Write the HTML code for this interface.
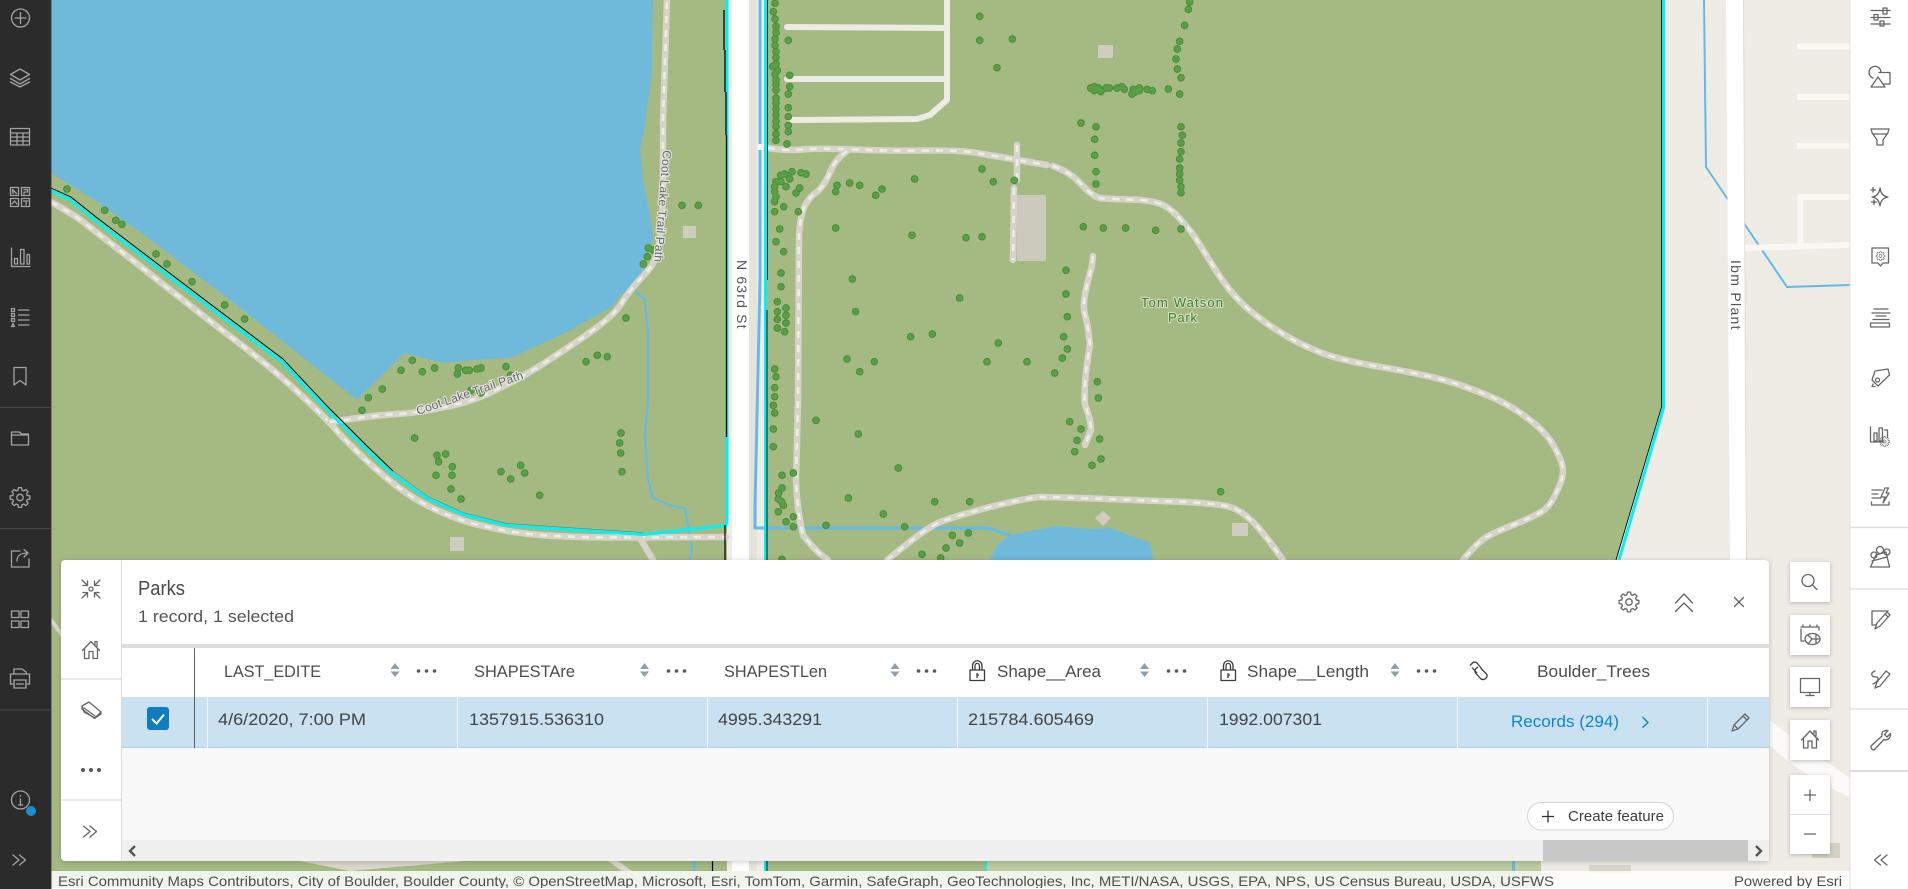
<!DOCTYPE html>
<html><head><meta charset="utf-8"><title>Parks</title>
<style>
html,body{margin:0;padding:0;width:1908px;height:889px;overflow:hidden;background:#fff}
svg{display:block}
text{font-family:"Liberation Sans",sans-serif}
.tr{fill:none;stroke:#d6d4c9;stroke-width:6.5;stroke-linejoin:round;stroke-linecap:round}
.td{fill:none;stroke:#eeece6;stroke-width:2.6;stroke-dasharray:7 7;stroke-linejoin:round}
.ln{fill:none;stroke:#ecebe4;stroke-width:6;stroke-linejoin:round;stroke-linecap:round}
.bl{fill:none;stroke:#62bbe6;stroke-width:2;stroke-linejoin:round}
.cy{fill:none;stroke:#00f2f7;stroke-width:3;stroke-linejoin:round}
.bk{fill:none;stroke:#000;stroke-width:.9;stroke-linejoin:round}
.hd{font-size:17px;fill:#4d4d4d}
.rw{font-size:17px;fill:#444}
.ic{fill:none;stroke:#a3a3a3;stroke-width:1.3;stroke-linejoin:round;stroke-linecap:round}
.ig{fill:none;stroke:#666;stroke-width:1.3;stroke-linejoin:round;stroke-linecap:round}
.div1{stroke:#484848;stroke-width:1}
.div2{stroke:#dcdcdc;stroke-width:1.2}
.s1{fill:none;stroke:#4b8c3a;stroke-width:23;stroke-linecap:round}
.s2{fill:none;stroke:#589f45;stroke-width:17;stroke-linecap:round}
.rl{font-size:14px;fill:#555;letter-spacing:.5px}
.tl{font-size:12px;fill:#666;stroke:#e6e6e0;stroke-width:2.2px;paint-order:stroke;stroke-linejoin:round}
.pk{font-size:13px;fill:#3f7c2f;stroke:#d4dfc2;stroke-width:2.2px;paint-order:stroke;stroke-linejoin:round}
</style></head><body>
<svg xmlns="http://www.w3.org/2000/svg" width="1908" height="889" viewBox="0 0 1908 889">
<defs>
<path id="gear" d="M9.88 -1.56L9.88 1.56L7.34 1.97L6.58 3.8L8.09 5.88L5.88 8.09L3.8 6.58L1.97 7.34L1.56 9.88L-1.56 9.88L-1.97 7.34L-3.8 6.58L-5.88 8.09L-8.09 5.88L-6.58 3.8L-7.34 1.97L-9.88 1.56L-9.88 -1.56L-7.34 -1.97L-6.58 -3.8L-8.09 -5.88L-5.88 -8.09L-3.8 -6.58L-1.97 -7.34L-1.56 -9.88L1.56 -9.88L1.97 -7.34L3.8 -6.58L5.88 -8.09L8.09 -5.88L6.58 -3.8L7.34 -1.97ZM3.2 0A3.2 3.2 0 1 1 -3.2 0A3.2 3.2 0 1 1 3.2 0Z"/>
<path id="home" d="M-8.5 1L0 -8L8.5 1M-6.5 -1V9H-2V2H2V9H6.5V-1M4 -5V-8H6V-3"/>
<path id="t9" d="M165 10h0M160 35h0M165 57h0M168 79h0M168 98h0M165 117h0M165 136h0M168 155h0M168 173h0M168 192h0M158 200h0M172 211h0M165 223h0M168 240h0M168 253h0M168 270h0M168 294h0M168 309h0M168 327h0M168 345h0M168 364h0M168 380h0M168 402h0M168 421h0M205 121h0M209 226h0M209 260h0M205 282h0M205 323h0M205 350h0M205 376h0M205 395h0M201 432h0M779 49h0M779 121h0M877 117h0M831 203h0M1409 6h0M1405 28h0M1394 76h0M1379 124h0M1372 147h0M1368 177h0M1372 207h0M1383 233h0M1379 282h0M1345 267h0M1112 264h0M1123 260h0M1127 268h0M1135 264h0M1123 272h0M1143 275h0M1158 264h0M1168 264h0M1191 264h0M1206 260h0M1213 268h0M1240 268h0M1258 264h0M1236 282h0M1247 275h0M1258 272h0M1281 268h0M1297 272h0M1083 369h0M1128 380h0M1124 418h0M1124 466h0M1128 515h0M1128 552h0M1383 380h0M1387 406h0M1383 429h0M1383 455h0M1379 477h0M1379 504h0M1379 522h0M1379 541h0M1383 560h0M1383 578h0M786 507h0M820 545h0M883 541h0M216 515h0M243 518h0M258 522h0M194 522h0M182 526h0M168 545h0M183 545h0M209 537h0M198 560h0M164 560h0M164 575h0M168 590h0M164 605h0M239 564h0M228 579h0M191 620h0M164 635h0M235 635h0M179 687h0M168 725h0M191 755h0M183 819h0M183 860h0M351 556h0M389 549h0M419 556h0M347 575h0M486 567h0M467 586h0M584 537h0M347 684h0M397 837h0M576 706h0M738 713h0M786 710h0M1090 680h0M1150 684h0M1217 684h0M1307 691h0M1383 687h0M1038 811h0"/>
<path id="t10" d="M172 65h0M198 84h0M172 95h0M198 106h0M172 118h0M198 129h0M172 144h0M194 155h0M407 95h0M719 54h0M1038 42h0M1042 110h0M572 170h0M637 162h0M835 189h0M1031 170h0M1042 207h0M1027 234h0M381 237h0M463 245h0M419 275h0M801 245h0M921 245h0M1004 279h0M164 267h0M168 290h0M164 323h0M164 350h0M160 376h0M164 399h0M1132 305h0M1135 354h0M288 421h0M415 462h0M160 447h0M160 500h0M1049 425h0M1083 447h0M1071 481h0M1139 477h0M1064 515h0M1143 537h0M1116 556h0M535 564h0M186 586h0M220 579h0M186 624h0M176 639h0M175 657h0M185 665h0M190 676h0M175 695h0M385 654h0M644 665h0M749 665h0M490 702h0M220 710h0M198 725h0M220 740h0M318 736h0M554 740h0M1502 635h0M697 766h0M745 759h0M719 789h0M678 804h0M606 823h0M662 834h0M186 838h0"/>
<path id="t12" d="M1146 16h0M1195 16h0M1045 144h0M1060 150h0M1042 170h0M1030 192h0M978 354h0M892 466h0M922 470h0M858 485h0M337 481h0M303 511h0M367 515h0M404 504h0M475 504h0M472 522h0M497 511h0M508 511h0M531 507h0M543 504h0M618 500h0M632 526h0M513 571h0M543 579h0M247 567h0M205 593h0M186 631h0M344 714h0M411 766h0M437 762h0M416 785h0M457 800h0M408 826h0M456 826h0M453 867h0M483 897h0M603 815h0M662 796h0M674 819h0M632 837h0M719 886h0M963 699h0M959 729h0M962 759h0M966 815h0"/>
<path id="t1" d="M201 567h0M314 631h0M347 661h0M366 673h0M468 762h0M501 792h0M576 845h0M674 915h0M734 957h0"/>
<path id="pA" d="M51 202Q75 215 87 225Q100 235 140 266Q180 298 227 334Q275 370 302 396Q330 422 337 431Q345 440 367 461Q390 482 405 492Q420 503 441 512Q463 522 488 527Q513 533 540 535Q567 537 603 537.500L726 537"/>
<path id="pB" d="M330 422Q377 415 397 414Q417 413 445 407Q473 402 500 388Q527 375 555 356Q583 338 600 325Q617 312 623 301Q630 290 643 276Q657 263 659 244Q662 225 663 190L663 120L667 0"/>
<path id="pC1" d="M768 148Q787 151 803 149.500Q820 148 853 149.500Q887 151 925 150.500Q963 150 980 153.500L1047 165"/>
<path id="pC2" d="M1053 166Q1070 172 1081 184Q1093 197 1100 198Q1107 199 1130 199.500Q1153 200 1163 205Q1173 210 1181 220Q1190 230 1195 237Q1200 245 1215 269Q1230 293 1246 307Q1263 322 1280 332Q1297 343 1317 351Q1337 360 1387 368Q1437 377 1460 385Q1483 393 1498 400Q1513 407 1530 420Q1547 433 1555 448Q1563 463 1563 471Q1563 480 1556 493Q1550 507 1541 512Q1533 517 1513 525Q1493 533 1485 538Q1477 543 1463 560"/>
<path id="pD" d="M887 560L907 544Q927 528 940 522Q953 517 990 507Q1027 498 1040 497Q1053 497 1120 499.500L1187 502Q1223 504 1233 508Q1243 512 1255 524Q1267 537 1283 560"/>
<path id="pE" d="M847 151Q835 160 831 170Q827 180 823 185Q820 190 813 195Q807 200 803 210Q800 220 799 235L798 400L796 480Q797 510 803 535Q817 553 828 560"/>
<path id="pF" d="M1017 145V180M1014 188L1013 260"/>
<path id="pG" d="M1093 256L1092 265L1087 285Q1082 305 1085 315Q1088 325 1090 345Q1083 385 1085 405Q1091 420 1091 430L1085 445"/>
</defs>

<!-- base map -->
<rect width="1908" height="889" fill="#a5ba83"/>
<path fill="#6fb9db" d="M51 0H653L652 70L645 125L640 150L643 180L650 215L653 237L640 280L623 293L610 308L567 332L513 357L443 363L404 353L357 400L230 300L140 232L90 197L51 173Z"/>
<path fill="#6fb9db" d="M990 560L997 545L1010 535L1057 526L1090 529L1110 528L1137 538L1150 543L1153 560Z"/>
<path fill="#efece6" d="M1661 0V407L1616 560L1541 861V889H1850V0Z"/>
<rect x="986" y="861" width="555" height="10" fill="#bccca0"/>
<rect x="1589" y="865" width="42" height="8" fill="#d8d5c8"/>
<rect x="1812" y="843" width="28" height="15" fill="#d5d2c5"/>

<!-- road strip -->
<rect x="727" y="0" width="40" height="871" fill="#efece6"/>
<rect x="732" y="0" width="17" height="871" fill="#fff"/>
<rect x="749" y="0" width="8" height="871" fill="#e6e3da"/>

<!-- Ibm Plant road etc. -->
<path class="bl" d="M1704 0L1706 167L1787 287L1850 285"/>
<path fill="#fff" d="M1726 0H1743L1746 560H1730Z"/>
<path stroke="#e1ded6" stroke-width="1" fill="none" d="M1743.5 0L1746.5 560"/>
<path fill="none" stroke="#f9f8f5" stroke-width="6" d="M1797 46.500H1850M1797 97H1850M1797 146H1850M1800.500 245V197H1850M1745 248L1850 245"/>
<path fill="#fbfaf8" d="M1770 720Q1800 745 1850 778V797Q1800 775 1770 745Z"/>

<!-- blue lines -->
<path class="bl" d="M635 291L645 300L648 335L648 400L645 435L648 480L653 498L672 506L685 508L692 550L690 560"/>
<path class="bl" style="stroke-width:3" d="M760 0V280L755 507V528H988L1010 535"/>
<rect x="693" y="861" width="2.500" height="10" fill="#62bbe6"/>
<rect x="1512" y="861" width="3" height="10" fill="#62bbe6"/>

<!-- trails -->
<use href="#pA" class="tr"/><use href="#pA" class="td"/>
<path class="tr" d="M640 538L653 560"/>
<use href="#pB" class="tr"/><use href="#pB" class="td"/>
<use href="#pC1" class="tr"/><use href="#pC1" class="td"/>
<use href="#pC2" class="tr"/><use href="#pC2" class="td"/>
<use href="#pD" class="tr"/><use href="#pD" class="td"/>
<use href="#pE" class="tr"/><use href="#pE" class="td"/>
<use href="#pF" class="tr"/><use href="#pF" class="td"/>
<use href="#pG" class="tr"/><use href="#pG" class="td"/>
<path fill="none" stroke="#f6f5f1" stroke-width="6" d="M757 147H767"/>
<path class="ln" d="M787 27L947 28M947 0V100L930 115L917 119L790 120M787 79H947"/>
<path fill="#d9d6cb" d="M300 861H465L350 871Z"/>
<path fill="#d9d6cb" d="M608 861H618L632 871H622Z"/>
<path fill="#d9d6cb" d="M51 617L61 630V637L51 623Z"/>

<!-- buildings -->
<rect x="1017" y="195" width="29" height="66" fill="#ccc9bd"/>
<rect x="1098" y="45" width="15" height="13" fill="#cfccc0"/>
<rect x="683" y="226" width="13" height="12" fill="#cfccc0"/>
<rect x="450" y="537" width="14" height="14" fill="#cfccc0"/>
<rect x="1232" y="523" width="16" height="13" fill="#cfccc0"/>
<path fill="#cfccc0" d="M1103 511L1111 518L1103 526L1095 518Z"/>

<!-- park boundary -->
<path class="cy" d="M51 190.500L69.500 199.500L94.500 219.500L203.500 302.500L281.500 361.500L326.500 409.500L365.500 448.500L391.500 473.500L427.500 498.500L463 514.500L507 525.500L643 534.500L726 525.500L727 520V0"/>
<path class="bk" d="M51 188L71 197L96 217L205 300L283 359L328 407L367 446L393 471"/>
<path class="bk" style="stroke:#12555a;stroke-width:.5;opacity:.6" d="M393 471L428 496.500L463 512.500L507 523.500L643 532.500"/>
<path class="bk" style="stroke-width:1.300" d="M724 10V50M725 50V92M726 92V135M726.500 135V437"/>
<path class="bk" style="stroke-width:1.200" d="M725 525V560M712.500 861V871"/>
<path class="cy" d="M765.500 0V871"/>
<path class="bk" d="M767.500 0V280M767 310V871"/>
<path class="cy" d="M1663.500 0V408L1619 560"/>
<path class="bk" d="M1661.500 0V407L1616 560"/>
<rect x="985" y="861" width="2" height="10" fill="#00f2f7"/>

<!-- trees -->
<g transform="translate(720 0) scale(.33333)"><use href="#t9" class="s1"/><use href="#t9" class="s2"/></g>
<g transform="translate(720 280) scale(.33333)"><use href="#t10" class="s1"/><use href="#t10" class="s2"/></g>
<g transform="translate(300 200) scale(.33333)"><use href="#t12" class="s1"/><use href="#t12" class="s2"/></g>
<g transform="scale(.33333)"><use href="#t1" class="s1"/><use href="#t1" class="s2"/></g>

<!-- map labels -->
<text transform="translate(737 260) rotate(90)" class="rl" textLength="69">N 63rd St</text>
<text transform="translate(1731 260) rotate(90)" class="rl" textLength="70">Ibm Plant</text>
<text x="1141" y="307" class="pk" textLength="82">Tom Watson</text>
<text x="1168" y="322" class="pk" textLength="29">Park</text>
<text transform="translate(418 415) rotate(-19)" class="tl" textLength="112">Coot Lake Trail Path</text>
<text transform="translate(663 150) rotate(94.500)" class="tl" textLength="112">Coot Lake Trail Path</text>

<!-- attribution -->
<rect x="51" y="871" width="1799" height="18" fill="#fff" fill-opacity=".84"/>
<text x="58" y="886" font-size="14" fill="#4e4e4e" textLength="1496" lengthAdjust="spacingAndGlyphs">Esri Community Maps Contributors, City of Boulder, Boulder County, © OpenStreetMap, Microsoft, Esri, TomTom, Garmin, SafeGraph, GeoTechnologies, Inc, METI/NASA, USGS, EPA, NPS, US Census Bureau, USDA, USFWS</text>
<text x="1734" y="886" font-size="14" fill="#4e4e4e" textLength="108" lengthAdjust="spacingAndGlyphs">Powered by Esri</text>
<rect x="0" y="888" width="1908" height="1" fill="#fff"/>

<!-- left sidebar -->
<rect x="0" y="0" width="51" height="889" fill="#2b2b2b"/>
<rect x="50.500" y="0" width="1" height="889" fill="#3e3e3e"/>
<path class="div1" d="M0 407.500H50M0 528.500H50M0 710H50"/>
<g class="ic">
<circle cx="20.500" cy="18" r="9"/><path d="M20.500 12.500V23.500M15 18H26"/>
<path d="M20 69L29.500 74.500L20 80L10.500 74.500ZM10.500 78.500L20 84L29.500 78.500M10.500 82L20 87L29.500 82"/>
<path d="M10.500 128.500H29.500V145H10.500ZM10.500 133H29.500M10.500 137H29.500M10.500 141H29.500M17 133V145M23 133V145"/>
<path d="M10.500 187.500H18.500V195.500H10.500ZM21.500 187.500H29.500V195.500H21.500ZM10.500 198.500H18.500V206.500H10.500ZM21.500 198.500H29.500V206.500H21.500ZM12.500 189.500L16.500 193.500M13 193.500L12.500 190.500M24 189.500H27.500V192H24V194M12 204L14.500 201L17 204M23.500 201H28M26 201V205"/>
<path d="M11.500 248V266.500H30M14.500 258.500H17.500V264H14.500ZM20.500 249.500H24V264H20.500ZM27 254.500H29.500V264H27Z"/>
<path d="M18.500 310H29M18.500 315H29M18.500 320H29M18.500 325H29M11.500 308.500H14.500V311.500H11.500ZM11.500 313.500H14.500V316.500H11.500ZM11.500 318.500H14.500V321.500H11.500ZM11.500 326.500L13 323.500L14.500 326.500Z"/>
<path d="M14 367.500H26V385L20 380.500L14 385Z"/>
<path d="M11.500 435H28.500V445H11.500ZM11.500 435V432H19.500L21.500 434H28.500V435"/>
<use href="#gear" transform="translate(20 497.500)"/>
<path d="M20 551H11.500V567H29V559M17 561C17 555 21 553 28 553M24 549.500L28 553L24 557"/>
<path d="M11.500 611H19V617.500H11.500ZM21 611H28.500V617.500H21ZM11.500 621H19V627.500H11.500ZM21 621H28.500V627.500H21Z"/>
<path d="M14 674V669H22L26 672V674M14 684H10.500V674H29.500V684H26M14 680H26V688H14ZM16.500 684H23.500"/>
<circle cx="20.500" cy="800" r="9"/><path d="M20.500 799V805M18.500 805H22.500M20.500 795.500V796"/>
<path d="M13 855L19 860L13 865M19.500 855L25.500 860L19.500 865"/>
</g>
<circle cx="31" cy="811" r="5" fill="#1a8fd3"/>

<!-- right sidebar -->
<rect x="1850" y="0" width="58" height="889" fill="#fff"/>
<path stroke="#e3e1db" d="M1850 0V889" fill="none"/>
<path class="div2" d="M1850 527.500H1908M1850 589H1908M1850 709H1908"/>
<path stroke="#dcdcdc" stroke-width="2" d="M1850 771H1908"/>
<g class="ig">
<path d="M1871 10.500H1890M1871 17.500H1890M1871 24H1890M1883 8H1887V14H1883ZM1874 14.500H1878V20H1874ZM1880 21H1884V26H1880Z" />
<path d="M1879 72.500H1890V84H1883M1871 87L1878 77L1885 87ZM1873 78A6 6 0 1 1 1881 72"/>
<path d="M1871 129H1889L1887.500 134H1872.500ZM1873 134L1877 140V145H1883V140L1887 134"/>
<path d="M1880 188Q1881 196 1888 197Q1881 198 1880 206Q1879 198 1872 197Q1879 196 1880 188ZM1873 187.500V192M1871 190H1875.500M1874 200V204.500M1871.500 202H1876.500"/>
<path d="M1873 248H1888.500V263H1883L1880.500 266L1878 263H1872V248Z"/>
<use href="#gear" transform="translate(1880.500 256) scale(.45)"/>
<path d="M1874 309H1888M1872 313H1890M1876 316H1886M1873 319.500H1889M1870.500 323H1889.500V327H1870.500Z"/>
<path d="M1875 371L1888 369L1889.500 375L1878 386L1872 380ZM1873 384L1872 386.500H1875"/><circle cx="1877.500" cy="380" r="2"/>
<path d="M1870.500 427V442H1884M1874 433H1877V441H1874ZM1879 428H1882.500V441H1879ZM1884.500 430H1887.500V437"/>
<use href="#gear" transform="translate(1884.500 441.500) scale(.5)"/>
<path d="M1872 490H1882M1872 494H1878M1872 498H1881M1871.500 502V505H1889V502M1885 488L1881 497H1885L1883 503L1889 493H1886L1888.500 488Z"/>
<path d="M1870.500 567L1876 555L1886 552L1889.500 567ZM1872 561L1887 557"/>
<circle cx="1874" cy="555" r="3"/><circle cx="1880" cy="550" r="3.500"/><circle cx="1887" cy="552" r="3"/>
<path d="M1888 611H1872V625H1876M1875 629L1877 623L1887 612L1890 615L1880 626ZM1885 614L1888 617"/>
<path d="M1875 671C1870 673 1871 677 1876 677C1880 677 1878 682 1873 684M1875 688L1877 682L1886 671L1890 674L1880 686Z"/>
<path d="M1871 746L1882 736C1881 732 1884 730 1888 730.500L1884.500 734.500L1887 737L1890.500 733.500C1891 738 1887 741 1884 739.500L1874 750Q1871 750 1871 746Z"/>
<path d="M1887 855L1881 860L1887 865M1880.500 855L1874.500 860L1880.500 865"/>
</g>

<!-- map buttons -->
<g style="filter:drop-shadow(0 1px 2px rgba(0,0,0,.25))" fill="#fff">
<rect x="1790" y="562" width="40" height="40"/>
<rect x="1790" y="615" width="40" height="40"/>
<rect x="1790" y="667" width="40" height="40"/>
<rect x="1790" y="720" width="40" height="40"/>
<rect x="1790" y="775" width="40" height="79"/>
</g>
<path stroke="#dcdcdc" d="M1790 814.500H1830"/>
<g class="ig">
<circle cx="1808" cy="580.500" r="6"/><path d="M1812.500 585L1817 589.500"/>
<path d="M1801 640V629M1801 627H1819V630M1803 625V627M1810 625V627M1817 625V627M1801 641H1804"/>
<ellipse cx="1812.500" cy="639" rx="7.500" ry="5.500"/><path d="M1808 635L1812 639L1808 644M1816 634.500V643.500M1812 639H1819"/>
<path d="M1800.500 678.500H1819.500V692.500H1800.500ZM1806 695.500H1814M1810 692.500V695.500"/>
<use href="#home" transform="translate(1810 739)"/>
<path d="M1810 790V800.500M1804.500 795H1815.500M1804.500 834H1815.500"/>
</g>

<!-- table panel -->
<g style="filter:drop-shadow(0 1px 3px rgba(0,0,0,.2))">
<rect x="61" y="560" width="1708" height="301" rx="4" fill="#fff"/>
</g>
<rect x="122" y="648" width="1647" height="49" fill="#fff"/>
<rect x="122" y="644" width="1647" height="4" fill="#dedede"/>
<rect x="122" y="697" width="1647" height="51" fill="#c9e1f1"/>
<rect x="122" y="747" width="1647" height="1" fill="#b6cfe0"/>
<rect x="122" y="748" width="1647" height="92" fill="#f8f8f8"/>
<rect x="122" y="840" width="1647" height="21" fill="#f0f0f0"/>
<rect x="1543" y="840" width="205" height="21" fill="#c8c8c8"/>
<path stroke="#dcdcdc" stroke-width="1" d="M121.500 560V861"/>
<path class="div2" d="M61 679H121M61 800H121"/>
<path stroke="#55606a" stroke-width="1" d="M194.500 648V748"/>
<path stroke="#f3f8fc" stroke-width="1" d="M207.500 697V748M457.500 697V748M707.500 697V748M957.500 697V748M1207.500 697V748M1457.500 697V748M1707.500 697V748"/>

<!-- rail icons -->
<g class="ig">
<circle cx="91" cy="589" r="2"/>
<path d="M82 580L87.500 585.500M87.500 581V585.500H83M100 580L94.500 585.500M94.500 581V585.500H99M82 598L87.500 592.500M87.500 597V592.500H83M100 598L94.500 592.500M94.500 597V592.500H99"/>
<use href="#home" transform="translate(91 649.500)"/>
<path d="M82 706L89 702L101 712L95 718L84 712ZM82 706V709L94.500 718.500L101 714V712M84 708L95 716"/>
<path d="M83.500 826L90 831.500L83.500 837M90 826L96.500 831.500L90 837"/>
</g>
<g fill="#5a5a5a"><circle cx="83" cy="770" r="2"/><circle cx="91" cy="770" r="2"/><circle cx="99" cy="770" r="2"/></g>

<!-- header -->
<text x="138" y="595" font-size="20" fill="#4a4a4a" textLength="47" lengthAdjust="spacingAndGlyphs">Parks</text>
<text x="138" y="622" font-size="17" fill="#555" textLength="156" lengthAdjust="spacingAndGlyphs">1 record, 1 selected</text>
<g class="ig">
<use href="#gear" transform="translate(1629 602)"/>
<path d="M1675.500 603L1684 594L1692.500 603M1675.500 611.500L1684 603L1692.500 611.500"/>
<path d="M1734.500 597.500L1743.500 606.500M1743.500 597.500L1734.500 606.500"/>
</g>

<!-- column heads -->
<text x="224" y="677" class="hd" textLength="97" lengthAdjust="spacingAndGlyphs">LAST_EDITE</text>
<text x="474" y="677" class="hd" textLength="101" lengthAdjust="spacingAndGlyphs">SHAPESTAre</text>
<text x="724" y="677" class="hd" textLength="103" lengthAdjust="spacingAndGlyphs">SHAPESTLen</text>
<text x="997" y="677" class="hd" textLength="104" lengthAdjust="spacingAndGlyphs">Shape__Area</text>
<text x="1247" y="677" class="hd" textLength="122" lengthAdjust="spacingAndGlyphs">Shape__Length</text>
<text x="1537" y="677" class="hd" textLength="113" lengthAdjust="spacingAndGlyphs">Boulder_Trees</text>

<!-- sort + dots -->
<g fill="#8f9ea8">
<path d="M390.500 669L395 663L399.500 669ZM390.500 671.500L395 677L399.500 671.500Z"/>
<path d="M640 669L644.500 663L649 669ZM640 671.500L644.500 677L649 671.500Z"/>
<path d="M890.500 669L895 663L899.500 669ZM890.500 671.500L895 677L899.500 671.500Z"/>
<path d="M1140 669L1144.500 663L1149 669ZM1140 671.500L1144.500 677L1149 671.500Z"/>
<path d="M1390.500 669L1395 663L1399.500 669ZM1390.500 671.500L1395 677L1399.500 671.500Z"/>
</g>
<g fill="#5a5a5a">
<circle cx="418.500" cy="671" r="1.800"/><circle cx="426.500" cy="671" r="1.800"/><circle cx="434.500" cy="671" r="1.800"/>
<circle cx="668.500" cy="671" r="1.800"/><circle cx="676.500" cy="671" r="1.800"/><circle cx="684.500" cy="671" r="1.800"/>
<circle cx="918.500" cy="671" r="1.800"/><circle cx="926.500" cy="671" r="1.800"/><circle cx="934.500" cy="671" r="1.800"/>
<circle cx="1168.500" cy="671" r="1.800"/><circle cx="1176.500" cy="671" r="1.800"/><circle cx="1184.500" cy="671" r="1.800"/>
<circle cx="1418.500" cy="671" r="1.800"/><circle cx="1426.500" cy="671" r="1.800"/><circle cx="1434.500" cy="671" r="1.800"/>
</g>
<g fill="none" stroke="#3c3c3c" stroke-width="1.300" stroke-linejoin="round">
<path d="M970 670H984.500V680.500H970ZM972.500 670V666C972.500 659 982 659 982 666V670M975 670V666C975 662.500 979.500 662.500 979.500 666V670M977 673V678M977 675H979"/>
<path d="M1221 670H1235.500V680.500H1221ZM1223.500 670V666C1223.500 659 1233 659 1233 666V670M1226 670V666C1226 662.500 1230.500 662.500 1230.500 666V670M1228 673V678M1228 675H1230"/>
<path d="M1470 665.500L1472.500 663C1474 661.500 1476 662 1477 663L1481.500 668.500M1486 678C1484.500 680 1482 680 1480.500 678.500L1476 673.500C1474.500 672 1474.500 670 1476 668.500L1478 667M1472 667.500L1477 673M1481 668.500L1486 673.500C1487.500 675 1487.500 677 1486 678"/>
</g>

<!-- row -->
<rect x="147" y="707" width="22" height="23" rx="3" fill="#0f7ec0"/>
<path d="M152 719L156.500 723.500L164 714.500" fill="none" stroke="#fff" stroke-width="2"/>
<text x="218" y="725" class="rw" textLength="148" lengthAdjust="spacingAndGlyphs">4/6/2020, 7:00 PM</text>
<text x="469" y="725" class="rw" textLength="135" lengthAdjust="spacingAndGlyphs">1357915.536310</text>
<text x="718" y="725" class="rw" textLength="104" lengthAdjust="spacingAndGlyphs">4995.343291</text>
<text x="968" y="725" class="rw" textLength="126" lengthAdjust="spacingAndGlyphs">215784.605469</text>
<text x="1219" y="725" class="rw" textLength="103" lengthAdjust="spacingAndGlyphs">1992.007301</text>
<text x="1511" y="727" font-size="17" fill="#0f86c9" textLength="108" lengthAdjust="spacingAndGlyphs">Records (294)</text>
<path d="M1642.500 717L1648 722.500L1642.500 727.500" fill="none" stroke="#0f86c9" stroke-width="1.500"/>
<g class="ig"><path d="M1732 731L1734 725L1745 714L1749 718L1738 729ZM1743 716L1747 720M1734 725L1738 729"/></g>

<!-- create feature -->
<rect x="1527.500" y="802.500" width="146" height="27.500" rx="13.700" fill="#fff" stroke="#d4d4d4"/>
<path d="M1542 816.500H1554M1548 810.500V822.500" stroke="#333" stroke-width="1.300" fill="none"/>
<text x="1568" y="821" font-size="14.500" fill="#404040" textLength="96" lengthAdjust="spacingAndGlyphs">Create feature</text>

<!-- scroll arrows -->
<path d="M135 846L130 851L135 856" fill="none" stroke="#555" stroke-width="2.400"/>
<path d="M1756 846L1761 851L1756 856" fill="none" stroke="#555" stroke-width="2.400"/>
</svg>
</body></html>
